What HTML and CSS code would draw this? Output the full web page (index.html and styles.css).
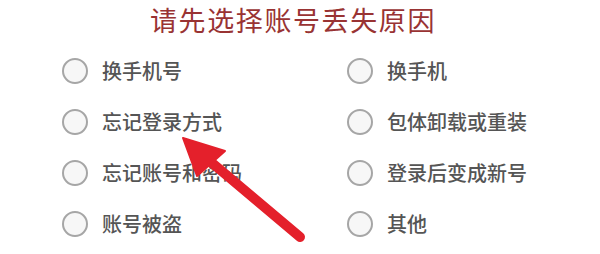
FILE: index.html
```html
<!DOCTYPE html>
<html lang="zh-CN">
<head>
<meta charset="utf-8">
<link rel="stylesheet" href="styles.css">
</head>
<body>
<div class="page">
  <h1 class="title">请先选择账号丢失原因</h1>
  <div class="options">
    <div class="opt"><span class="radio"></span><span class="label">换手机号</span></div>
    <div class="opt"><span class="radio"></span><span class="label">换手机</span></div>
    <div class="opt"><span class="radio"></span><span class="label">忘记登录方式</span></div>
    <div class="opt"><span class="radio"></span><span class="label">包体卸载或重装</span></div>
    <div class="opt"><span class="radio"></span><span class="label">忘记账号和密码</span></div>
    <div class="opt"><span class="radio"></span><span class="label">登录后变成新号</span></div>
    <div class="opt"><span class="radio"></span><span class="label">账号被盗</span></div>
    <div class="opt"><span class="radio"></span><span class="label">其他</span></div>
  </div>
  <svg class="arrow" width="600" height="254" viewBox="0 0 600 254">
    <line x1="300" y1="237" x2="205" y2="157" stroke="#e4202b" stroke-width="10" stroke-linecap="round"/>
    <polygon points="183,138 225,151 197,176" fill="#e4202b" stroke="#e4202b" stroke-width="2" stroke-linejoin="round"/>
  </svg>
</div>
</body>
</html>
```
FILE: styles.css
```css
html, body {
  margin: 0;
  padding: 0;
  background: #ffffff;
}
.page {
  position: relative;
  width: 600px;
  height: 254px;
  overflow: hidden;
  font-family: "Noto Sans CJK SC", "Noto Sans", sans-serif;
}
.title {
  margin: 0;
  height: 44px;
  padding: 2px 14px 0 0;
  box-sizing: border-box;
  text-align: center;
  font-size: 27px;
  font-weight: 400;
  line-height: 36px;
  color: #993333;
  letter-spacing: 1.6px;
}
.options {
  display: grid;
  grid-template-columns: 285px 1fr;
  grid-auto-rows: 51px;
  padding-left: 62px;
  padding-top: 1px;
}
.opt {
  display: flex;
  align-items: center;
  gap: 14px;
}
.radio {
  width: 22px;
  height: 22px;
  border: 2px solid #a6a6a6;
  border-radius: 50%;
  background: #f7f7f7;
  flex: none;
}
.label {
  font-size: 20px;
  font-weight: 500;
  color: #555555;
  line-height: 26px;
}
.arrow {
  position: absolute;
  left: 0;
  top: 0;
}
```
